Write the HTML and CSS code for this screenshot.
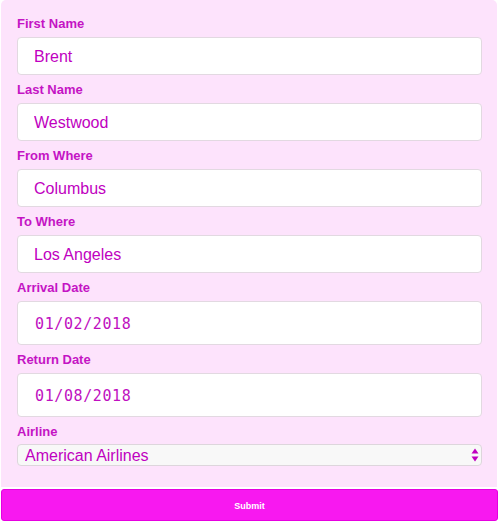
FILE: index.html
```html
<!DOCTYPE html>
<html>
<head>
<meta charset="utf-8">
<link rel="stylesheet" href="styles.css">
</head>
<body>
<form class="panel">
  <label class="label">First Name</label>
  <input class="field" type="text" value="Brent">
  <label class="label">Last Name</label>
  <input class="field" type="text" value="Westwood">
  <label class="label">From Where</label>
  <input class="field" type="text" value="Columbus">
  <label class="label">To Where</label>
  <input class="field" type="text" value="Los Angeles">
  <label class="label">Arrival Date</label>
  <input class="field date" type="text" value="01/02/2018">
  <label class="label">Return Date</label>
  <input class="field date" type="text" value="01/08/2018">
  <label class="label">Airline</label>
  <div class="select-wrap">
    <select class="select">
      <option>American Airlines</option>
    </select>
    <svg class="arrows" width="8" height="14" viewBox="0 0 8 14">
      <path d="M4 0.5 L7.5 5.5 L0.5 5.5 Z" fill="#c000c0"/>
      <path d="M4 13.5 L7.5 8.5 L0.5 8.5 Z" fill="#c000c0"/>
    </svg>
  </div>
</form>
<button class="submit" type="button">Submit</button>
</body>
</html>
```
FILE: styles.css
```css
html, body {
  margin: 0;
  padding: 0;
  background: #ffffff;
  font-family: "Liberation Sans", Arial, sans-serif;
}

.panel {
  margin: 0 0 0 1px;
  width: 496px;
  box-sizing: border-box;
  padding: 16px 15px 21px 16px;
  background: #fde3fc;
  border-radius: 5px 5px 0 0;
  display: flex;
  flex-direction: column;
}

.label {
  display: block;
  font-size: 13px;
  line-height: 15px;
  font-weight: bold;
  color: #c414c4;
  margin-bottom: 6px;
}

.field {
  display: block;
  box-sizing: border-box;
  width: 100%;
  height: 38px;
  margin: 0 0 7px 0;
  padding: 1px 16px 0 16px;
  border: 1px solid #e2d9e1;
  border-radius: 4px;
  background: #ffffff;
  font-family: "Liberation Sans", Arial, sans-serif;
  font-size: 16px;
  color: #c000c0;
  outline: none;
}

.date {
  height: 44px;
  font-family: "DejaVu Sans Mono", "Liberation Mono", monospace;
  font-size: 15px;
  letter-spacing: 0.6px;
  padding-left: 17px;
  color: #c010c0;
}

.select-wrap {
  position: relative;
  height: 22px;
  margin-top: -1px;
}

.select {
  display: block;
  box-sizing: border-box;
  width: 100%;
  height: 22px;
  margin: 0;
  padding: 1px 7px 0 7px;
  border: 1px solid #ddd6dc;
  border-radius: 4px;
  background: #f8f8f8;
  font-family: "Liberation Sans", Arial, sans-serif;
  font-size: 16px;
  line-height: 20px;
  color: #c000c0;
  -webkit-appearance: none;
  appearance: none;
  outline: none;
}

.arrows {
  position: absolute;
  right: 3px;
  top: 4px;
}

.submit {
  display: block;
  box-sizing: border-box;
  margin: 2px 0 0 1px;
  width: 497px;
  height: 32px;
  border: 1px solid #e600e0;
  border-radius: 3px;
  background: #f818f0;
  color: #ffffff;
  font-family: "Liberation Sans", Arial, sans-serif;
  font-size: 9px;
  font-weight: bold;
  padding: 1px 0 0 0;
}
```
